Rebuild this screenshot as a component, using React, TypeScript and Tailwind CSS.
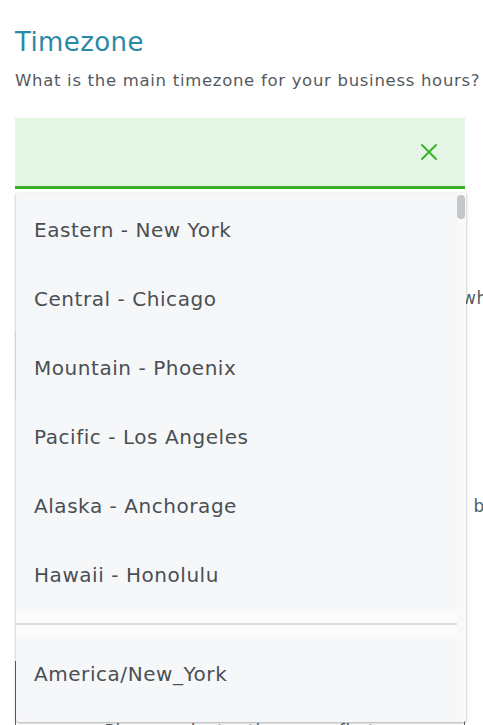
import { X } from 'lucide-react'

const options = [
  'Eastern - New York',
  'Central - Chicago',
  'Mountain - Phoenix',
  'Pacific - Los Angeles',
  'Alaska - Anchorage',
  'Hawaii - Honolulu',
]

export default function App() {
  return (
    <div className="relative h-[725px] w-[483px] overflow-hidden bg-white font-['DejaVu_Sans',sans-serif]">
      <div className="px-[15px] pt-[25px]">
        <h2 className="text-[26px] leading-[34px] text-[#2a8aa6] tracking-[0.4px]">Timezone</h2>
        <p className="mt-[11px] whitespace-nowrap text-[16.5px] leading-[22px] tracking-[0.7px] text-[#555a5e]">
          What is the main timezone for your business hours?
        </p>

        {/* Selected input */}
        <div className="relative mt-[26px]">
          <div className="flex h-[71px] w-[450px] items-center justify-end border-b-[3px] border-[#3cb02a] bg-[#e4f6e3] pr-[22px]">
            <X className="h-[28px] w-[28px] text-[#3cb02a]" strokeWidth={1.7} />
          </div>

          {/* Content behind the dropdown */}
          <div className="pt-[98px] text-[17px] leading-[22px] tracking-[0.7px] text-[#555a5e]">
            <p className="-mr-[20px] whitespace-nowrap text-right">On which days are you open, and wh</p>
            <div className="mt-[22px] h-[70px] w-[450px] border border-[#f0f0f0]" />
            <p className="-mr-[17px] mt-[94px] whitespace-nowrap text-right">What are your hours b</p>
            <div className="mt-[144px] h-[80px] w-[450px] border border-[#666] bg-white pt-[58px] text-center">
              <span>Please select a timezone first</span>
            </div>
          </div>

          {/* Dropdown */}
          <div className="absolute left-[1px] top-[75px] flex h-[529px] w-[450px] overflow-hidden rounded-b-[4px] bg-[#f6f7f9] shadow-[0_1px_3px_rgba(0,0,0,0.35)]">
            <div className="flex flex-1 flex-col pt-[2px]">
              {options.map((o) => (
                <div key={o} className="flex h-[69px] shrink-0 items-center pl-[18px] text-[20px] tracking-[0.55px] text-[#4a4f54]">
                  {o}
                </div>
              ))}
              <div className="flex h-[30px] shrink-0 items-center bg-[#fbfbfc]">
                <div className="h-[2px] w-full bg-[#dcdee0]" />
              </div>
              <div className="flex h-[70px] shrink-0 items-center pl-[18px] text-[20px] tracking-[0.55px] text-[#4a4f54]">
                America/New_York
              </div>
            </div>
            <div className="w-[9px] shrink-0 bg-[#f9f9fa] pt-[2px]">
              <div className="h-[24px] w-[8px] rounded-full bg-[#c4c6c8]" />
            </div>
          </div>
        </div>
      </div>
    </div>
  )
}
